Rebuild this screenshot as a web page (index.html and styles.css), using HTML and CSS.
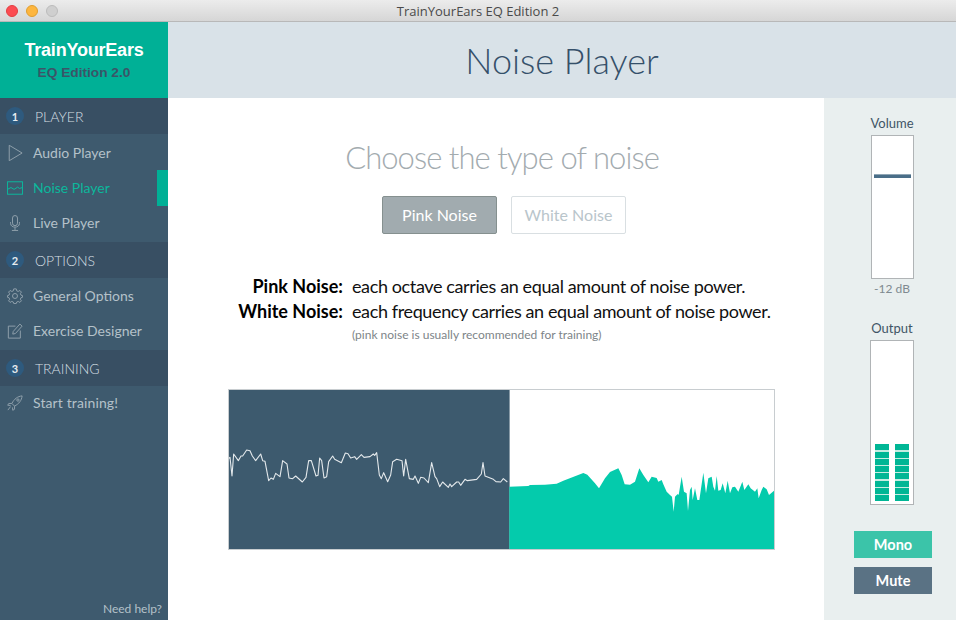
FILE: index.html
```html
<!DOCTYPE html>
<html lang="en">
<head>
<meta charset="utf-8">
<title>TrainYourEars EQ Edition 2</title>
<link rel="stylesheet" href="styles.css">
</head>
<body>
<div class="window">
  <header class="titlebar">
    <div class="lights"><span class="light red"></span><span class="light amber"></span><span class="light grey"></span></div>
    <div class="wintitle">TrainYourEars EQ Edition 2</div>
  </header>
  <div class="app">
    <aside class="sidebar">
      <div class="brand"><div class="brand-name">TrainYourEars</div><div class="brand-sub">EQ Edition 2.0</div></div>
      <div class="section first"><span class="num">1</span><span>PLAYER</span></div>
      <a class="item"><svg class="ico" viewBox="0 0 18 18"><path d="M2.5 0.3 L17 9 L2.5 17.7 Z"/></svg>Audio Player</a>
      <a class="item active"><svg class="ico" viewBox="0 0 18 18"><rect x="0.6" y="2" width="16.8" height="14"/><path d="M0.6 10.5 L4.5 8.5 L8 10.5 L12 8 L14 9.5 L17.4 8.5"/></svg>Noise Player<span class="marker"></span></a>
      <a class="item"><svg class="ico" viewBox="0 0 18 18"><rect x="6.2" y="0.6" width="5.6" height="11.4" rx="2.8"/><path d="M4 8 V9.5 C4 15 14 15 14 9.5 V8 M9 13.8 V17 M5.5 17.4 H12.5"/></svg>Live Player</a>
      <div class="section"><span class="num">2</span><span>OPTIONS</span></div>
      <a class="item"><svg class="ico" viewBox="0 0 18 18"><circle cx="9" cy="9" r="2.8"/><path d="M7.6 1 H10.4 L10.9 3.2 L12.6 3.9 L14.5 2.8 L16.2 4.6 L15 6.4 L15.7 8 L17.5 8.6 V10.4 L15.7 11 L15 12.6 L16.2 14.4 L14.5 16.2 L12.6 15.1 L10.9 15.8 L10.4 17.5 H7.6 L7.1 15.8 L5.4 15.1 L3.5 16.2 L1.8 14.4 L3 12.6 L2.3 11 L0.5 10.4 V8.6 L2.3 8 L3 6.4 L1.8 4.6 L3.5 2.8 L5.4 3.9 L7.1 3.2 Z"/></svg>General Options</a>
      <a class="item"><svg class="ico" viewBox="0 0 18 18"><path d="M9.5 3.5 H1.5 V17 H15 V8.5"/><path d="M7 9.5 L14.5 1.2 L17 3.5 L9.5 11.8 L6.5 12.5 Z"/></svg>Exercise Designer</a>
      <div class="section"><span class="num">3</span><span>TRAINING</span></div>
      <a class="item start"><svg class="ico" viewBox="0 0 18 18"><path d="M5.5 9.5 C8 4.5 12 1.5 17 1 C16.5 6 13.5 10 8.5 12.5 Z"/><circle cx="12.3" cy="5.7" r="1.3"/><path d="M5.5 9.5 L2 9.5 L0.8 11.5 L4 11.8 M8.5 12.5 V16 L6.5 17.2 L6.2 14 M4 13 L1 17"/></svg>Start training!</a>
      <div class="help">Need help?</div>
    </aside>
    <main class="main">
      <div class="pagehead">Noise Player</div>
      <div class="content">
        <section class="center">
          <h2 class="choose">Choose the type of noise</h2>
          <div class="choices"><button class="btn on">Pink Noise</button><button class="btn off">White Noise</button></div>
          <dl class="defs">
            <dt>Pink Noise:</dt><dd>each octave carries an equal amount of noise power.</dd>
            <dt>White Noise:</dt><dd>each frequency carries an equal amount of noise power.</dd>
            <dt></dt><dd class="note">(pink noise is usually recommended for training)</dd>
          </dl>
          <div class="graph">
            <svg class="graph-svg" viewBox="0 0 545 159" preserveAspectRatio="none">
              <rect x="0" y="0" width="280.6" height="159" fill="#3d5a6e"/>
              <polyline class="wave" transform="translate(-9 40) scale(0.33333)" points="27,85 30,82 36,138 41,72 55,92 63,78 68,78 80,60 90,62 97,78 107,92 122,72 128,92 135,94 146,152 153,144 160,148 167,130 180,140 188,92 201,102 207,144 218,146 227,138 247,156 258,142 266,92 274,92 288,138 294,136 299,84 305,92 312,144 320,140 326,95 338,78 344,88 364,98 376,69 384,71 392,84 404,80 410,88 424,74 432,82 450,80 460,72 464,76 470,68 478,135 484,146 491,128 503,155 512,135 518,95 530,88 546,92 551,138 557,88 568,146 580,148 585,138 595,160 602,142 612,144 625,158 635,98 645,140 650,146 659,170 668,156 685,172 690,162 695,170 710,156 716,156 722,166 735,148 742,152 770,148 784,132 789,98 795,138 820,148 828,155 842,156 850,146 862,156"/>
              <polygon class="spectrum" transform="translate(271 60) scale(0.33333)" points="28,110 85,108 90,105 135,104 170,101 190,92 250,69 262,74 285,100 297,115 315,85 330,66 355,55 365,75 374,103 390,104 405,95 418,55 430,75 445,97 455,80 470,84 475,95 485,90 490,103 500,125 510,135 516,140 521,185 525,140 530,135 534,132 536,135 545,80 552,125 560,130 564,183 570,120 575,110 578,150 585,115 592,150 598,150 610,68 618,130 625,85 635,80 640,110 645,122 650,78 655,122 662,120 668,100 676,130 683,92 690,130 697,112 705,110 715,125 727,95 733,120 745,103 752,115 765,125 772,115 776,145 785,120 790,110 800,118 807,135 815,128 822,122 822,298 28,298"/>
            </svg>
          </div>
        </section>
        <aside class="meters">
          <div class="meter-label">Volume</div>
          <div class="vol"><span class="fader"></span></div>
          <div class="db">-12 dB</div>
          <div class="meter-label out">Output</div>
          <div class="out-box">
            <div class="col"><i></i><i></i><i></i><i></i><i></i><i></i><i></i><i></i></div>
            <div class="col"><i></i><i></i><i></i><i></i><i></i><i></i><i></i><i></i></div>
          </div>
          <button class="side-btn mono">Mono</button>
          <button class="side-btn mute">Mute</button>
        </aside>
      </div>
    </main>
  </div>
</div>
</body>
</html>
```
FILE: styles.css
```css
* { box-sizing: border-box; }
html, body { margin: 0; padding: 0; }
body { width: 956px; height: 620px; overflow: hidden; font-family: Lato, sans-serif; background: #fff; }
.window { width: 956px; height: 620px; display: flex; flex-direction: column; }
.titlebar { height: 22px; flex: none; display: flex; align-items: center; position: relative; background: linear-gradient(#ececec, #d6d6d6); border-bottom: 1px solid #b8b8b8; }
.lights { display: flex; gap: 8px; padding-left: 6px; }
.light { width: 12px; height: 12px; border-radius: 50%; }
.red { background: #fc4c52; border: 1px solid #e33e41; }
.amber { background: #fdb63f; border: 1px solid #e09e2f; }
.grey { background: #cfcfcf; border: 1px solid #bcbcbc; }
.wintitle { position: absolute; left: 0; right: 0; top: 3px; text-align: center; font: 13px/16px "Open Sans", sans-serif; color: #4a4a4a; }
.app { flex: 1; display: flex; min-height: 0; }
.sidebar { width: 168px; flex: none; background: #3e5a6e; display: flex; flex-direction: column; position: relative; }
.brand { height: 76px; background: #00b096; display: flex; flex-direction: column; align-items: center; padding-top: 18px; font-family: "Liberation Sans", sans-serif; font-weight: 700; }
.brand-name { font-size: 18px; line-height: 21px; color: #fff; letter-spacing: -0.2px; }
.brand-sub { font-size: 13.7px; line-height: 20px; margin-top: 2px; color: #3b5568; }
.section { height: 36px; flex: none; display: flex; align-items: center; padding-left: 6px; gap: 11px; margin-top: 2px; background: #384f63; color: #d5dfe4; font-size: 14px; font-weight: 300; }
.first { margin-top: 0; margin-bottom: 1px; }
.num { width: 18px; height: 18px; border-radius: 50%; background: #2e5a7e; color: #e6ecf0; font-size: 11px; font-weight: 700; display: flex; align-items: center; justify-content: center; }
.item { height: 35px; flex: none; display: flex; align-items: center; position: relative; padding-left: 7px; gap: 10px; font-size: 14px; font-weight: 400; color: #b4c1c9; }
.start { padding-bottom: 2px; letter-spacing: 0.12px; }
.ico { width: 16px; height: 16px; flex: none; fill: none; stroke: #8fa0ab; stroke-width: 1.1; }
.active { color: #0cb79c; }
.active .ico { stroke: #0cb79c; }
.marker { position: absolute; right: 0; top: 0; width: 11px; height: 36px; background: #00b096; }
.help { position: absolute; right: 6px; bottom: 4px; font-size: 12px; color: #b4c1c9; }
.main { flex: 1; display: flex; flex-direction: column; min-width: 0; }
.pagehead { height: 76px; flex: none; background: #d9e2e8; color: #35506a; font-size: 36px; font-weight: 300; line-height: 76px; text-align: center; }
.content { flex: 1; display: flex; min-height: 0; }
.center { flex: 1; display: flex; flex-direction: column; align-items: center; padding: 40px 0 0 12px; }
.choose { margin: 0; font-size: 31px; line-height: 38px; font-weight: 300; letter-spacing: -0.95px; color: #a3abaf; }
.choices { display: flex; gap: 14px; margin: 20px 0 0 4px; }
.btn { width: 115px; height: 38px; border-radius: 2px; font: 400 16px Lato, sans-serif; padding: 0 0 2px; }
.on { background: #a1abaf; border: 1px solid #85908f; color: #fff; }
.off { background: #fff; border: 1px solid #d9dfe2; color: #b9c5cb; }
.defs { display: grid; grid-template-columns: 163px auto; column-gap: 9px; margin: 40px 0 0; align-self: flex-start; font-size: 18px; line-height: 25px; letter-spacing: -0.38px; color: #111; }
.defs dt { font-weight: 700; letter-spacing: 0; text-align: right; color: #000; }
.defs dd { margin: 0; font-weight: 400; }
.defs .note { font-size: 12px; line-height: 22px; letter-spacing: 0; color: #7d8488; }
.graph { margin: 43px 0 0 48px; width: 547px; height: 161px; border: 1px solid #c8cdd0; align-self: flex-start; flex: none; }
.graph-svg { display: block; width: 100%; height: 100%; }
.wave { fill: none; stroke: #e4e9ec; stroke-width: 3.3; stroke-linejoin: round; }
.spectrum { fill: #04cbac; }
.meters { width: 132px; flex: none; background: #e9efef; display: flex; flex-direction: column; align-items: center; padding: 17px 0 0 4px; }
.meter-label { font-size: 13px; line-height: 16px; color: #3f5566; font-weight: 400; }
.vol { width: 43px; height: 144px; margin-top: 4px; background: #fff; border: 1px solid #b0b4b6; position: relative; }
.fader { position: absolute; left: 2px; right: 2px; top: 38px; height: 4px; background: #4a6e88; border-top: 1px solid #8fa6b5; }
.db { font-size: 12px; line-height: 14px; color: #7f8a90; margin-top: 3px; }
.out { margin-top: 24px; }
.out-box { width: 44px; height: 165px; margin-top: 4px; background: #fff; border: 1px solid #b0b4b6; display: flex; gap: 6px; align-items: flex-end; justify-content: center; padding-bottom: 3px; }
.col { width: 14px; display: flex; flex-direction: column; gap: 1.25px; background: #c6ece2; }
.col i { display: block; height: 6px; background: #00b695; }
.side-btn { width: 78px; height: 27px; border: 0; color: #fff; padding: 0; margin-left: 2px; font: 700 14.5px Lato, sans-serif; }
.mono { background: #3bc4a9; margin-top: 26px; }
.mute { background: #5a7284; margin-top: 9px; }
```
